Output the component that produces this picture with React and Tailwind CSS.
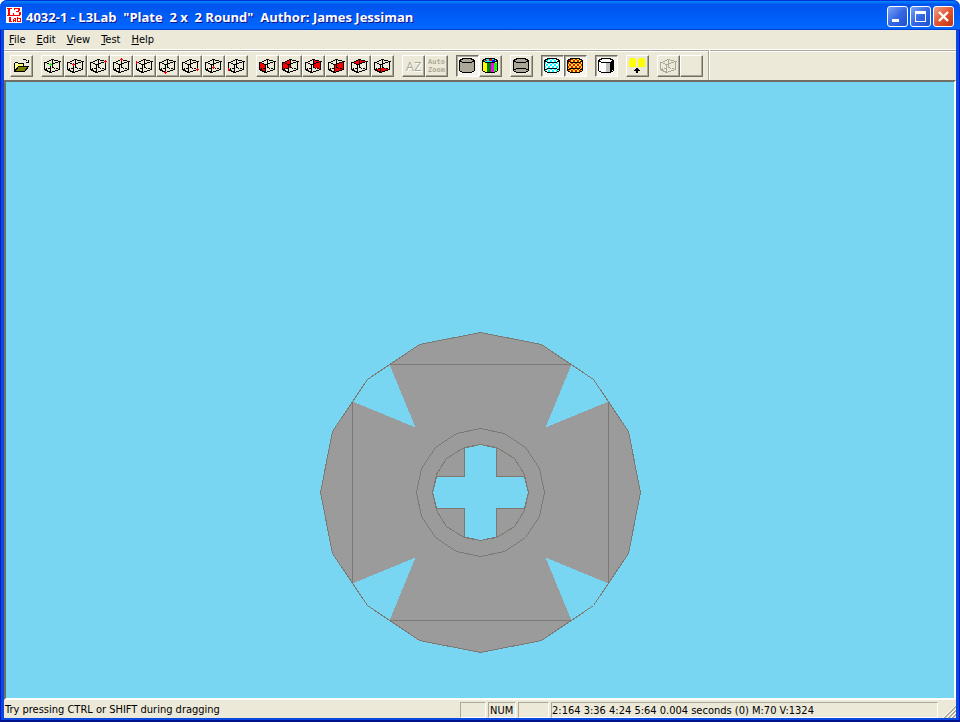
import { clsx } from "clsx";

const MENUS = ["File", "Edit", "View", "Test", "Help"];

// corners of the wire cube, shared by the view buttons
const CORNERS = [
  { label: "Origin", x: 6, y: 5, color: "#00ff00" },
  { label: "Front top corner", x: 6, y: 5, color: "#ff0000" },
  { label: "Right top corner", x: 15, y: 2, color: "#ff0000" },
  { label: "Back top corner", x: 8, y: 0, color: "#ff0000" },
  { label: "Left top corner", x: 0, y: 3, color: "#ff0000" },
  { label: "Front bottom corner", x: 6, y: 13, color: "#ff0000" },
  { label: "Right bottom corner", x: 15, y: 10, color: "#ff0000" },
  { label: "Back bottom corner", x: 8, y: 8, color: "#ff0000" },
  { label: "Left bottom corner", x: 0, y: 10, color: "#ff0000" },
];

const FACES = [
  { label: "Left face", points: "0,3 6,5 6,13 0,10" },
  { label: "Back face", points: "0,3 8,0 8,8 0,10" },
  { label: "Right face", points: "8,0 15,2 15,10 8,8" },
  { label: "Front face", points: "6,5 15,2 15,10 6,13" },
  { label: "Top face", points: "0,3 8,0 15,2 6,5" },
  { label: "Bottom face", points: "0,10 8,8 15,10 6,13" },
];

const ring = (r) =>
  Array.from({ length: 16 }, (_, i) => {
    const a = (i * Math.PI) / 8;
    return `${Math.round(r * Math.cos(a))},${Math.round(r * Math.sin(a))}`;
  }).join(" ");

const Cube = ({ face, dot, color = "#000000" }) => (
  <svg width="17" height="16" viewBox="-0.5 -1.5 17 16" shapeRendering="crispEdges" aria-hidden="true">
    {face && <polygon points={face} fill="#ff0000" />}
    <g fill="none" stroke={color}>
      <path d="M1 3L6 5L15 2L8 0ZM0 3V10L6 13L15 10M6 5V13M15 2V10" />
      <path d="M0 10L8 8L15 10M8 0V8" strokeDasharray="3 1" />
    </g>
    {dot && (
      <path
        d={`M${dot.x - 1.5} ${dot.y}h3M${dot.x} ${dot.y - 1.5}v3`}
        stroke={dot.color}
      />
    )}
  </svg>
);

const Cylinder = ({ fill, top, lower, children }) => (
  <svg width="17" height="16" viewBox="-0.5 -0.5 17 16" shapeRendering="crispEdges" aria-hidden="true">
    <defs>
      <pattern id="cyanDots" x="-0.5" y="-0.5" width="4" height="4" patternUnits="userSpaceOnUse">
        <rect width="4" height="4" fill="#ffffff" />
        <path d="M0 0h2v2h-2zM2 2h2v2h-2z" fill="#00ffff" />
      </pattern>
      <pattern id="redDots" x="-0.5" y="-0.5" width="4" height="4" patternUnits="userSpaceOnUse">
        <rect width="4" height="4" fill="#ffff00" />
        <path d="M0 0h2v2h-2zM2 2h2v2h-2z" fill="#ff0000" />
      </pattern>
    </defs>
    <path d="M4 0H11L15 2V12L12 14H3L0 12V2Z" fill={fill} />
    <path d="M4 0H11L15 2L12 4H3L0 2Z" fill={top || fill} />
    {children}
    <path d="M4 0H11L15 2V12L12 14H3L0 12V2ZM0 2L3 4H12L15 2" fill="none" stroke="#000000" />
    {lower && <path d="M0 12L3 10H12L15 12" fill="none" stroke="#000000" />}
  </svg>
);

const ToolButton = ({ label, pressed, disabled, children }) => (
  <button
    type="button"
    aria-label={label}
    aria-pressed={pressed}
    disabled={disabled}
    className={clsx(
      "flex h-[22px] w-[23px] shrink-0 items-center justify-center border",
      pressed
        ? "border-t-[#716f64] border-l-[#716f64] border-r-white border-b-white bg-[#f6f4ec] shadow-[inset_1px_1px_0_#aca899]"
        : "border-t-white border-l-white border-r-[#716f64] border-b-[#716f64] bg-[#ece9d8] shadow-[inset_-1px_-1px_0_#aca899]"
    )}
  >
    {children}
  </button>
);

const Group = ({ children }) => <div className="flex shrink-0">{children}</div>;

const OpenIcon = () => (
  <svg width="17" height="14" viewBox="0 0 17 14" shapeRendering="crispEdges" aria-hidden="true">
    <path d="M1 4h1v-1h3v1h6v3h-6l-4 6z" fill="#ffff80" />
    <path d="M1.5 12.5V4.5L2.5 3.5H4.5L5.5 4.5H10.5V7" fill="none" stroke="#000000" />
    <path d="M1.5 12.5L5.5 7.5H15.5L11.5 12.5Z" fill="#808000" stroke="#000000" />
    <path d="M9.5 1.5L10.5 .5H12.5L14.5 2.5M15.5 1V3.5H13" fill="none" stroke="#000000" />
  </svg>
);

const Logo = () => (
  <svg width="16" height="16" viewBox="0 0 16 16" shapeRendering="crispEdges" aria-hidden="true">
    <rect width="16" height="16" fill="#ffffff" />
    <g fill="none" stroke="#ff0000">
      <path d="M1 1.5H6M3.5 1V9M2.5 1V9M1 8.5H7.5V6" />
      <path d="M8 1.5H14M13.5 2V4M12.5 2V4M10 4.5H13M13.5 5V8M7 8.5H14M14.5 5V8M8.5 1V3" />
      <path d="M3.5 10V14M4.5 10V14M3 14.5H6M7.5 12V15M8 11.5H9.5V15M7 13.5H9M11.5 10V15M12 11.5H14.5V14.5H11" />
    </g>
  </svg>
);

const CaptionButton = ({ label, close, children }) => (
  <button
    type="button"
    aria-label={label}
    className={clsx(
      "flex size-[21px] items-center justify-center rounded-[3px] border border-white",
      close
        ? "bg-linear-to-br from-[#f0a088] via-[#e25530] to-[#c43010]"
        : "bg-linear-to-br from-[#7ba2f4] via-[#3768e4] to-[#1c4ed0]"
    )}
  >
    <svg width="19" height="19" viewBox="0 0 19 19" aria-hidden="true">
      {children}
    </svg>
  </button>
);

const TitleBar = () => (
  <header className="flex h-[30px] shrink-0 items-center rounded-t-[7px] bg-linear-to-b from-[#0997ff] from-0% via-[#0053ee] via-15% to-[#0066ff] to-90% pr-[6px] pl-[6px] shadow-[inset_0_1px_0_#0831d9,inset_0_-1px_0_#0043cf]">
    <Logo />
    <h1 className="min-w-0 flex-1 truncate pt-[3px] pl-1 font-['Open_Sans',sans-serif] text-[13px] leading-4 font-bold whitespace-pre text-white [text-shadow:1px_1px_0_#0f1089]">
      {'4032-1 - L3Lab  "Plate  2 x  2 Round"  Author: James Jessiman'}
    </h1>
    <div className="flex gap-[2px] pt-[3px]">
      <CaptionButton label="Minimize">
        <path d="M4 12h7v3h-7z" fill="#ffffff" />
      </CaptionButton>
      <CaptionButton label="Maximize">
        <path d="M4 4h11v11h-11zM5 7v7h9v-7z" fill="#ffffff" fillRule="evenodd" />
      </CaptionButton>
      <CaptionButton label="Close" close>
        <path d="M5 5L14 14M14 5L5 14" stroke="#ffffff" strokeWidth="2.4" />
      </CaptionButton>
    </div>
  </header>
);

const MenuBar = () => (
  <nav className="flex h-[19px] shrink-0 items-center gap-[11px] pl-[5px]">
    {MENUS.map((m) => (
      <button key={m} type="button" className="leading-4">
        <span className="underline underline-offset-1">{m[0]}</span>
        {m.slice(1)}
      </button>
    ))}
  </nav>
);

const ToolBar = () => (
  <div className="flex h-[31px] shrink-0 border-t border-white shadow-[inset_0_1px_0_#aca899,inset_0_2px_0_#ffffff]">
    <div role="toolbar" aria-label="Tools" className="flex items-start gap-2 border-r border-[#aca899] pt-[5px] pr-[5px] pl-[6px]">
      <Group>
        <ToolButton label="Open"><OpenIcon /></ToolButton>
      </Group>
      <Group>
        {CORNERS.map((c) => (
          <ToolButton key={c.label} label={c.label}><Cube dot={c} /></ToolButton>
        ))}
      </Group>
      <Group>
        {FACES.map((f) => (
          <ToolButton key={f.label} label={f.label}><Cube face={f.points} /></ToolButton>
        ))}
      </Group>
      <Group>
        <ToolButton label="AZ" disabled>
          <span className="font-['Open_Sans',sans-serif] text-[13px] leading-4 text-[#aca899] [text-shadow:1px_1px_0_#ffffff]">AZ</span>
        </ToolButton>
        <ToolButton label="Auto Zoom" disabled>
          <span className="font-['DejaVu_Sans_Mono',monospace] text-[7px] leading-[8px] font-bold text-[#aca899]">
            Auto<br />Zoom
          </span>
        </ToolButton>
      </Group>
      <Group>
        <ToolButton label="Solid" pressed><Cylinder fill="#aca899" /></ToolButton>
        <ToolButton label="Colours">
          <Cylinder fill="#ffff00" top="#00ffff">
            <path d="M4.5 4.5h4v9h-4z" fill="#008000" />
            <path d="M8.5 4.5h3v9h-3z" fill="#ff00ff" />
            <path d="M11.5 4.5h3v7l-3 2z" fill="#00ff00" />
            <path d="M6.5 .5h3v2h-3zM2.5 1.5h2v1h-2z" fill="#ff0000" />
            <path d="M9.5 1.5h3v2h-3z" fill="#0000ff" />
          </Cylinder>
        </ToolButton>
      </Group>
      <Group>
        <ToolButton label="Edges"><Cylinder fill="#aca899" lower /></ToolButton>
      </Group>
      <Group>
        <ToolButton label="Transparent" pressed><Cylinder fill="url(#cyanDots)" lower /></ToolButton>
        <ToolButton label="Dithered" pressed><Cylinder fill="url(#redDots)" lower /></ToolButton>
      </Group>
      <Group>
        <ToolButton label="Shading" pressed>
          <Cylinder fill="#ffffff">
            <path d="M7.5 4.5h4v9h-4z" fill="#c0c0c0" />
            <path d="M11.5 4.5l3 -2v9l-3 2z" fill="#000000" />
          </Cylinder>
        </ToolButton>
      </Group>
      <Group>
        <ToolButton label="Studs">
          <svg width="17" height="16" viewBox="0 0 17 16" shapeRendering="crispEdges" aria-hidden="true">
            <path d="M1 0h5v1h1v8h-7v-7h1zM10 0h5v1h1v8h-7v-8h1z" fill="#ffff00" />
            <path d="M7 10h2v1h1v1h1v1h-2v2h-2v-2h-2v-1h1v-1h1z" fill="#000000" />
          </svg>
        </ToolButton>
      </Group>
      <Group>
        <ToolButton label="Wireframe" disabled><Cube color="#aca899" /></ToolButton>
        <ToolButton label="Blank" />
      </Group>
    </div>
    <div className="w-px bg-white" />
  </div>
);

const Plate = () => (
  <svg className="w-[323px] shrink-0 self-start" viewBox="-161.5 -161.5 323 323" shapeRendering="crispEdges" role="img" aria-label="Plate 2 x 2 Round">
    <polygon points={ring(160)} fill="#9b9b9b" />
    {[0, 90, 180, 270].map((deg) => (
      <polygon
        key={deg}
        points="91,-128 113,-113 128,-91 65,-65"
        transform={`rotate(${deg})`}
        fill="#78d6f2"
      />
    ))}
    {/* arms of the axle hole */}
    <path
      d="M-16 -45L0 -48L16 -45V-16H44L48 0L44 16H16V45L0 48L-16 45V16H-44L-48 0L-44 -16H-16Z"
      fill="#78d6f2"
      stroke="#7b7972"
    />
    <g fill="none" stroke="#7b7972">
      <polygon points={ring(160)} />
      <polygon points={ring(64)} />
      <polygon points={ring(48)} />
      <path d="M-91 -128H91M-91 128H91M-128 -91V91M128 -91V91" />
    </g>
  </svg>
);

const Pane = ({ className, children }) => (
  <div className={clsx("h-4 border border-t-[#aca899] border-r-white border-b-white border-l-[#aca899] leading-4 whitespace-nowrap", className)}>
    {children}
  </div>
);

const StatusBar = () => (
  <footer className="flex h-[18px] shrink-0 items-end gap-[2px]">
    <p className="min-w-0 flex-1 truncate pl-px leading-4">Try pressing CTRL or SHIFT during dragging</p>
    <Pane className="w-[26px]" />
    <Pane className="w-[28px] pl-px">NUM</Pane>
    <Pane className="w-[31px]" />
    <Pane className="w-[387px]">2:164 3:36 4:24 5:64 0.004 seconds (0) M:70 V:1324</Pane>
    <svg className="ml-[3px]" width="13" height="13" viewBox="0 0 13 13" aria-hidden="true">
      <path d="M0 13L13 0M4 13L13 4M8 13L13 8" stroke="#ffffff" />
      <path d="M1 13L13 1M2 13L13 2M5 13L13 5M6 13L13 6M9 13L13 9M10 13L13 10" stroke="#aca899" />
    </svg>
  </footer>
);

const App = () => {
  return (
    <div className="flex min-h-screen flex-col bg-white font-['DejaVu_Sans_Condensed','DejaVu_Sans',sans-serif] text-[11px] text-black">
      <TitleBar />
      <div className="flex flex-1 flex-col border-x border-b-2 border-x-[#0019cf] border-b-[#00138c]">
        <div className="flex flex-1 flex-col border-x-3 border-b-2 border-[#0a48e0] bg-[#ece9d8]">
          <MenuBar />
          <ToolBar />
          <main className="flex flex-1 justify-center overflow-hidden border-2 border-t-[#716f64] border-r-white border-b-white border-l-[#716f64] bg-[#78d6f2] pt-[249px] pb-11">
            <Plate />
          </main>
          <StatusBar />
        </div>
      </div>
    </div>
  );
};

export default App;
